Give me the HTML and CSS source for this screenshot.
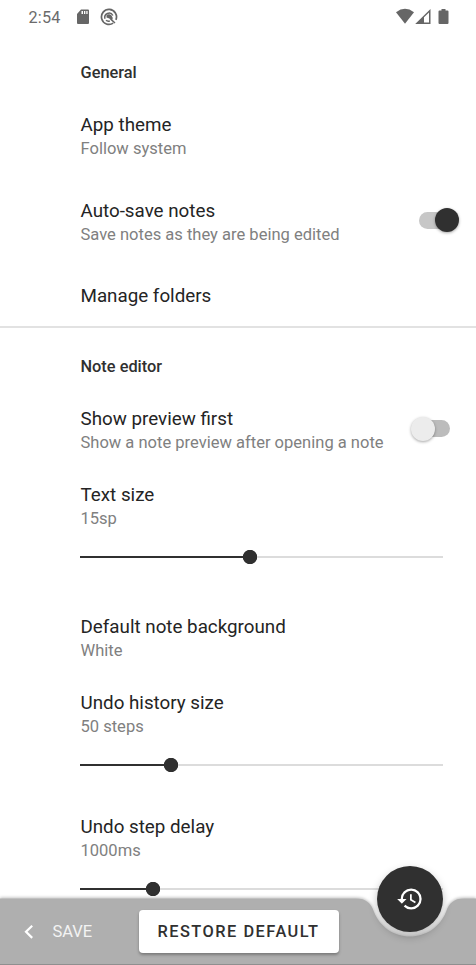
FILE: index.html
```html
<!DOCTYPE html>
<html lang="en">
<head>
<meta charset="utf-8">
<title>Settings</title>
<link rel="stylesheet" href="styles.css">
</head>
<body>
<div class="screen">
  <header class="status">
    <span class="clock">2:54</span>
    <svg class="sd" width="12" height="16" viewBox="0 0 12 16"><path fill="#666" fill-rule="evenodd" d="M4 0.5H11Q12 .5 12 1.5V14Q12 15 11 15H1Q0 15 0 14V5ZM4.5 2V5H6V2ZM7 2V5H8.3V2ZM9.3 2V5H10.6V2Z"/></svg>
    <svg class="dnd" width="18" height="18" viewBox="0 0 18 18" fill="none" stroke="#666"><path stroke-width="1.7" d="M13.2 15.1A7.500 7.500 0 1 1 15.9 11.8"/><path stroke-width="1.5" d="M5 10.8A4.300 4.300 0 0 1 12.9 7.500M6 12.300Q7.500 13.600 9.800 13"/><path fill="#666" stroke="none" d="M6.500 7.200Q9 5 11.500 7.500Q13.200 9.500 12.300 11.500L15.500 14.500L14.500 15.500L11 12.500Q10 10 6.500 9.500Z"/></svg>
    <svg class="signals" width="54" height="18" viewBox="0 0 54 18"><path fill="#666" d="M0 4.3Q9 -2.6 18 4.3L9 15.8Z"/><path fill="#666" fill-rule="evenodd" d="M19.2 16L34.5 1V16ZM28 9.3V14.5H33V4.4Z"/><path fill="#666" d="M45.5 1h4v1.5h2q1 0 1 1V15q0 1-1 1h-8q-1 0-1-1V3.500q0-1 1-1h2Z"/></svg>
  </header>

  <main class="settings">
    <h2 class="section general">General</h2>
    <div class="row roomy"><div><div class="title">App theme</div><div class="sub">Follow system</div></div></div>
    <div class="row roomy"><div><div class="title">Auto-save notes</div><div class="sub">Save notes as they are being edited</div></div><span class="switch on"></span></div>
    <div class="row folders"><div class="title">Manage folders</div></div>
    <h2 class="section editor">Note editor</h2>
    <div class="row compact"><div><div class="title">Show preview first</div><div class="sub">Show a note preview after opening a note</div></div><span class="switch off"></span></div>
    <div class="row text-size"><div><div class="title">Text size</div><div class="sub">15sp</div><div class="slider" style="--value:170px"></div></div></div>
    <div class="row compact"><div><div class="title">Default note background</div><div class="sub">White</div></div></div>
    <div class="row history"><div><div class="title">Undo history size</div><div class="sub">50 steps</div><div class="slider" style="--value:91px"></div></div></div>
    <div class="row delay"><div><div class="title">Undo step delay</div><div class="sub">1000ms</div><div class="slider" style="--value:73px"></div></div></div>
  </main>

  <footer class="bar">
    <svg class="bar-shape" width="476" height="77" viewBox="0 -10 476 77"><path fill="#afafaf" d="M0 .5H356C366 .5 371 5 374 14C380 29 394 38.500 410 38.500C426 38.500 440 29 446 14C449 5 454 .5 464 .5H476V67H0Z"/><path fill="#8f8f8f" d="M0 66H476V67H0Z"/></svg>
    <svg class="chevron" width="10" height="16" viewBox="0 0 10 16"><path d="M8.200 1.700L2 7.800L8.200 13.900" fill="none" stroke="#fff" stroke-width="2.2"/></svg>
    <span class="save">SAVE</span>
    <button class="restore">RESTORE DEFAULT</button>
    <button class="fab" aria-label="History"><svg width="28" height="28" viewBox="0 0 24 24"><path fill="#fff" d="M13 3a9 9 0 0 0-9 9H1l3.890 3.890.07.14L9 12H6c0-3.870 3.130-7 7-7s7 3.130 7 7-3.130 7-7 7c-1.930 0-3.680-.79-4.940-2.060l-1.420 1.420A8.954 8.954 0 0 0 13 21a9 9 0 0 0 0-18zm-1 5v5l4.280 2.540.72-1.210-3.500-2.080V8H12z"/></svg></button>
  </footer>
</div>
</body>
</html>
```
FILE: styles.css
```css
* { box-sizing: border-box; }
body { margin: 0; background: #fff; font-family: Roboto, sans-serif; }
.screen { width: 476px; height: 965px; overflow: hidden; display: flex; flex-direction: column; }
.status { height: 36px; flex: none; display: flex; align-items: center; padding: 0 26px 2px 28.500px; }
.clock { width: 48px; font-size: 16.200px; color: #6b6b6b; letter-spacing: .2px; }
.dnd { margin-left: 11px; }
.signals { margin-left: auto; }
.settings { height: 862px; flex: none; overflow: hidden; }
.section { margin: 0; padding-left: 80.500px; display: flex; align-items: center; font-size: 16.350px; font-weight: 500; color: #303030; }
.general { height: 73px; }
.editor { height: 77px; }
.row { display: flex; justify-content: space-between; padding: 4px 32px 0 80.500px; white-space: nowrap; }
.title { height: 24px; line-height: 24px; font-size: 18.800px; color: #242424; }
.sub { height: 24px; line-height: 23px; font-size: 16.550px; color: #808080; }
.roomy { height: 85.500px; }
.folders { height: 48px; border-bottom: 2px solid #e2e2e2; }
.compact { height: 76px; padding-top: 2px; }
.text-size { height: 132px; padding-top: 2px; }
.history { height: 123.500px; padding-top: 2px; }
.delay { height: 90px; padding-top: 2px; }
.slider { width: 363px; height: 14px; margin: 19px 0 0 -.5px; background:
  radial-gradient(circle 7.500px at var(--value) 7px, #303030 6.800px, transparent 7.500px),
  linear-gradient(#303030, #303030) 0 6px / var(--value) 2px no-repeat,
  linear-gradient(#dcdcdc, #dcdcdc) 0 6px / 100% 2px no-repeat; }
.switch { position: relative; width: 32px; height: 17px; border-radius: 9px; flex: none; }
.switch::after { content: ""; position: absolute; top: -3.500px; width: 24px; height: 24px; border-radius: 50%; box-shadow: 0 1px 3px rgba(0,0,0,.35); }
.on { margin: 13px -7px 0 0; background: #c7c7c7; }
.on::after { right: -7.500px; background: #303030; }
.off { margin: 13px -6px 0 0; background: #bcbcbc; }
.off::after { left: -7.500px; background: #ececec; }
.bar { position: relative; height: 67px; flex: none; display: flex; align-items: center; padding-left: 23.500px; }
.bar-shape { position: absolute; left: 0; top: -10px; filter: drop-shadow(0 -1px 1.500px rgba(0,0,0,.25)); }
.chevron, .save, .restore { position: relative; }
.save { width: 86px; margin-left: 19px; font-size: 16.500px; color: #f3f3f3; }
.restore { width: 200px; height: 43px; padding: 0; border: 0; border-radius: 4px; background: #fff; color: #303030; font: 500 16.350px Roboto, sans-serif; letter-spacing: 1.500px; white-space: nowrap; box-shadow: 0 2px 3px rgba(0,0,0,.3); }
.fab { position: absolute; left: 377px; top: -32.500px; width: 66px; height: 66px; padding: 0; border: 0; border-radius: 50%; background: #303030; display: grid; place-items: center; box-shadow: 0 4px 8px rgba(0,0,0,.28); }
```
